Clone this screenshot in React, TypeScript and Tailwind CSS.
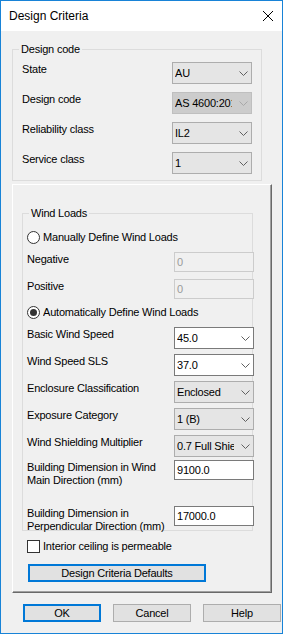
import React from "react";

type Kind = "list" | "disabled" | "edit";

function Chevron({ color }: { color: string }) {
  return (
    <svg width="9" height="5" viewBox="0 0 9 5" className="shrink-0">
      <polyline points="0.5,0.5 4.5,4.5 8.5,0.5" fill="none" stroke={color} strokeWidth="1" />
    </svg>
  );
}

function Combo({ value, kind }: { value: string; kind: Kind }) {
  const cls =
    kind === "list"
      ? "bg-[#e5e5e5] border-[#adadad]"
      : kind === "disabled"
      ? "bg-[#cccccc] border-[#bfbfbf]"
      : "bg-white border-[#7a7a7a]";
  return (
    <div className={`flex items-center w-[80px] h-[22px] shrink-0 border ${cls} pl-[2px] pr-[3px]`}>
      <span className="w-[57px] overflow-hidden whitespace-nowrap leading-[13px]">{value}</span>
      <span className="ml-auto flex">
        <Chevron color={kind === "disabled" ? "#a8a8a8" : "#606060"} />
      </span>
    </div>
  );
}

function TextBox({ value, disabled }: { value: string; disabled?: boolean }) {
  return (
    <div
      className={
        disabled
          ? "w-[80px] h-[20px] shrink-0 border border-[#cccccc] bg-[#f0f0f0] text-[#9a9a9a] pl-[2px] flex items-center leading-[13px]"
          : "w-[80px] h-[20px] shrink-0 border border-[#7a7a7a] bg-white pl-[2px] flex items-center leading-[13px]"
      }
    >
      {value}
    </div>
  );
}

function Radio({ checked, label }: { checked?: boolean; label: string }) {
  return (
    <div className="flex items-center h-[13px] gap-[3px]">
      <div className="w-[13px] h-[13px] shrink-0 rounded-full border border-[#333333] bg-white flex items-center justify-center">
        {checked && <div className="w-[7px] h-[7px] rounded-full bg-[#333333]" />}
      </div>
      <span className="leading-[13px] whitespace-nowrap w-[156px] overflow-hidden">{label}</span>
    </div>
  );
}

function Row({ label, children, mt }: { label: React.ReactNode; children: React.ReactNode; mt: string }) {
  return (
    <div className={`flex items-start ${mt}`}>
      <div className="w-[147px] shrink-0 mt-[1px] leading-[13px]">{label}</div>
      {children}
    </div>
  );
}

function TopRow({ label, children }: { label: string; children: React.ReactNode }) {
  return (
    <div className="flex items-start h-[22px]">
      <div className="w-[150px] shrink-0 mt-[1px] leading-[13px]">{label}</div>
      {children}
    </div>
  );
}

function Button({ label, focused, w }: { label: string; focused?: boolean; w: string }) {
  return (
    <div
      className={`${w} h-[18px] flex items-center justify-center bg-[#e1e1e1] leading-[13px] ${
        focused ? "border-2 border-[#0078d7]" : "border border-[#adadad]"
      }`}
    >
      {label}
    </div>
  );
}

export default function App() {
  return (
    <div className="w-[283px] h-[634px] border border-[#1883d7] bg-[#f0f0f0] flex flex-col font-['Liberation_Sans',Arial,sans-serif] text-[11px] tracking-[-0.2px] text-black overflow-hidden">
      {/* Title bar */}
      <div className="h-[30px] bg-white flex items-center justify-between pl-[8px] pr-[9px] shrink-0">
        <span className="text-[12px] tracking-normal">Design Criteria</span>
        <svg width="10" height="10" viewBox="0 0 10 10">
          <line x1="0" y1="0" x2="10" y2="10" stroke="#000" strokeWidth="1" />
          <line x1="10" y1="0" x2="0" y2="10" stroke="#000" strokeWidth="1" />
        </svg>
      </div>

      {/* Body */}
      <div className="flex-1 pl-[11px] pt-[18px] flex flex-col">
        {/* Design code group */}
        <div className="relative w-[250px] h-[132px] border border-[#dcdcdc] pt-[12px] pl-[9px] flex flex-col gap-[8px] shrink-0">
          <span className="absolute top-[-7px] left-[6px] px-[2px] bg-[#f0f0f0] leading-[13px]">Design code</span>
          <TopRow label="State">
            <Combo value="AU" kind="list" />
          </TopRow>
          <TopRow label="Design code">
            <Combo value="AS 4600:2018" kind="disabled" />
          </TopRow>
          <TopRow label="Reliability class">
            <Combo value="IL2" kind="list" />
          </TopRow>
          <TopRow label="Service class">
            <Combo value="1" kind="list" />
          </TopRow>
        </div>

        {/* Raised panel */}
        <div className="mt-[3px] w-[260px] h-[409px] shrink-0 border border-t-white border-l-white border-r-[#696969] border-b-[#696969] shadow-[inset_-1px_-1px_0_#a0a0a0] pl-[9px] pt-[28px] flex flex-col">
          {/* Wind loads group */}
          <div className="relative w-[231px] h-[318px] shrink-0 border border-[#dcdcdc] pl-[4px] pt-[17px] flex flex-col">
            <span className="absolute top-[-7px] left-[6px] px-[2px] bg-[#f0f0f0] leading-[13px]">Wind Loads</span>
            <Radio label="Manually Define Wind Loads" />
            <Row label="Negative" mt="mt-[8px]">
              <TextBox value="0" disabled />
            </Row>
            <Row label="Positive" mt="mt-[7px]">
              <TextBox value="0" disabled />
            </Row>
            <div className="mt-[7px]">
              <Radio checked label="Automatically Define Wind Loads" />
            </div>
            <Row label="Basic Wind Speed" mt="mt-[8px]">
              <Combo value="45.0" kind="edit" />
            </Row>
            <Row label="Wind Speed SLS" mt="mt-[5px]">
              <Combo value="37.0" kind="edit" />
            </Row>
            <Row label="Enclosure Classification" mt="mt-[5px]">
              <Combo value="Enclosed" kind="list" />
            </Row>
            <Row label="Exposure Category" mt="mt-[5px]">
              <Combo value="1 (B)" kind="list" />
            </Row>
            <Row label="Wind Shielding Multiplier" mt="mt-[5px]">
              <Combo value="0.7 Full Shielding" kind="list" />
            </Row>
            <Row
              label={
                <>
                  Building Dimension in Wind
                  <br />
                  Main Direction (mm)
                </>
              }
              mt="mt-[3px]"
            >
              <TextBox value="9100.0" />
            </Row>
            <Row
              label={
                <>
                  Building Dimension in
                  <br />
                  Perpendicular Direction (mm)
                </>
              }
              mt="mt-[19px]"
            >
              <TextBox value="17000.0" />
            </Row>
          </div>

          {/* Checkbox */}
          <div className="mt-[9px] ml-[5px] flex items-center gap-[3px] h-[13px]">
            <div className="w-[13px] h-[13px] shrink-0 border border-[#333333] bg-white" />
            <span className="leading-[13px]">Interior ceiling is permeable</span>
          </div>

          <div className="mt-[11px] ml-[6px]">
            <Button label="Design Criteria Defaults" focused w="w-[178px]" />
          </div>
        </div>

        {/* Bottom buttons */}
        <div className="mt-[11px] ml-[11px] flex gap-[12px]">
          <Button label="OK" focused w="w-[78px]" />
          <Button label="Cancel" w="w-[78px]" />
          <Button label="Help" w="w-[78px]" />
        </div>
      </div>
    </div>
  );
}
